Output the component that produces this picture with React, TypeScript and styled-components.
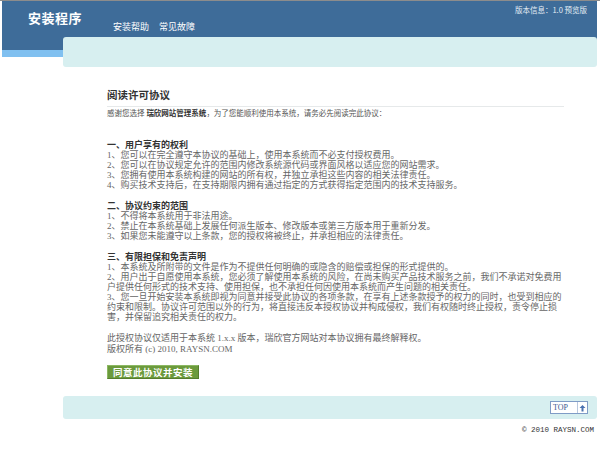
import React from "react";
import styled, { createGlobalStyle } from "styled-components";

const cnFont = `"Liberation Serif", "Noto Sans CJK SC", serif`;

const GlobalStyle = createGlobalStyle`
  body {
    margin: 0;
    background: #fff;
    font-family: ${cnFont};
  }
`;

const Page = styled.div`
  border-top: 1px solid #8c8c8c;
  padding: 0 3px 0 2px;
`;

const Header = styled.div`
  display: flex;
  align-items: flex-start;
  height: 36px;
  background: #3e6c99;
  color: #fff;
`;

const Logo = styled.div`
  width: 85px;
  padding: 10px 0 0 26px;
  font-size: 13px;
  font-weight: bold;
  line-height: 16px;
  letter-spacing: 0.5px;
`;

const Nav = styled.div`
  display: flex;
  gap: 10px;
  padding-top: 20px;
  font-family: "Noto Sans CJK SC", sans-serif;
  font-size: 9px;
  line-height: 11px;
`;

const Version = styled.div`
  margin-left: auto;
  padding: 4px 10px 0 0;
  font-family: "Noto Sans CJK SC", sans-serif;
  font-size: 7.5px;
  line-height: 10px;
  color: #e4ecf4;
`;

const SubBar = styled.div`
  display: flex;
  height: 30px;
`;

const SubEdge = styled.div`
  width: 61px;
  background: linear-gradient(
    #3e6c99 0 13px,
    #80c0f0 13px 20px,
    #fff 20px
  );
`;

const SubPanelWrap = styled.div`
  flex: 1;
  background: linear-gradient(#3e6c99 0 13px, #fff 13px);
`;

const SubPanel = styled.div`
  height: 100%;
  background: #d7eff0;
  border-radius: 3px;
`;

const Content = styled.div`
  width: 457px;
  padding: 22px 0 0 105px;
`;

const Heading = styled.h1`
  margin: 0;
  padding-bottom: 4px;
  border-bottom: 1px solid #e6e9ea;
  font-size: 10.5px;
  line-height: 13px;
  font-weight: bold;
  color: #333;
`;

const Thanks = styled.p`
  margin: 2px 0 21px;
  font-size: 7.5px;
  line-height: 10px;
  color: #555;

  b {
    color: #333;
  }
`;

const Section = styled.div`
  margin-bottom: 11px;
  font-size: 9px;
  line-height: 10px;
  color: #666;
`;

const SectionTitle = styled.div`
  font-weight: bold;
  color: #333;
`;

const Line = styled.div``;

const Notice = styled.div`
  font-size: 9px;
  line-height: 10.5px;
  color: #666;
`;

const AgreeButton = styled.button`
  display: block;
  box-sizing: border-box;
  margin-top: 11px;
  padding: 0 5px;
  height: 14px;
  background: #6b9a3c;
  border: 1px solid #8cb862;
  border-right-color: #557d2c;
  border-bottom-color: #557d2c;
  color: #fff;
  font-family: "Noto Sans CJK SC", sans-serif;
  font-size: 9.5px;
  font-weight: bold;
  line-height: 12px;
  letter-spacing: 0.5px;
`;

const FootBar = styled.div`
  display: flex;
  justify-content: flex-end;
  align-items: center;
  height: 23px;
  margin: 17px 0 0 61px;
  padding-right: 9px;
  background: #d7eff0;
  border-radius: 3px;
`;

const TopLink = styled.a`
  display: flex;
  align-items: stretch;
  height: 11px;
  background: #fff;
  border: 1px solid #7f9cc6;
  color: #3a5a90;
  font-family: "Liberation Serif", serif;
  font-size: 8px;
  line-height: 11px;
  text-decoration: none;
`;

const TopText = styled.span`
  width: 24px;
  padding-left: 2px;
  border-right: 1px solid #b8c8de;
`;

const TopArrow = styled.span`
  display: flex;
  align-items: center;
  justify-content: center;
  width: 9px;
`;

const Copyright = styled.div`
  padding: 6px 3px 0 0;
  text-align: right;
  font-family: "Liberation Mono", monospace;
  font-size: 7.5px;
  line-height: 10px;
  color: #333;
`;

const sections = [
  {
    title: "一、用户享有的权利",
    items: [
      "1、您可以在完全遵守本协议的基础上，使用本系统而不必支付授权费用。",
      "2、您可以在协议规定允许的范围内修改系统源代码或界面风格以适应您的网站需求。",
      "3、您拥有使用本系统构建的网站的所有权，并独立承担这些内容的相关法律责任。",
      "4、购买技术支持后，在支持期限内拥有通过指定的方式获得指定范围内的技术支持服务。",
    ],
  },
  {
    title: "二、协议约束的范围",
    items: [
      "1、不得将本系统用于非法用途。",
      "2、禁止在本系统基础上发展任何派生版本、修改版本或第三方版本用于重新分发。",
      "3、如果您未能遵守以上条款，您的授权将被终止，并承担相应的法律责任。",
    ],
  },
  {
    title: "三、有限担保和免责声明",
    items: [
      "1、本系统及所附带的文件是作为不提供任何明确的或隐含的赔偿或担保的形式提供的。",
      "2、用户出于自愿使用本系统，您必须了解使用本系统的风险，在尚未购买产品技术服务之前，我们不承诺对免费用户提供任何形式的技术支持、使用担保，也不承担任何因使用本系统而产生问题的相关责任。",
      "3、您一旦开始安装本系统即视为同意并接受此协议的各项条款，在享有上述条款授予的权力的同时，也受到相应的约束和限制。协议许可范围以外的行为，将直接违反本授权协议并构成侵权，我们有权随时终止授权，责令停止损害，并保留追究相关责任的权力。",
    ],
  },
];

function ArrowUp() {
  return (
    <svg width="7" height="8" viewBox="0 0 7 8">
      <path d="M3.5 1 L6.5 4 H4.5 V7.5 H2.5 V4 H0.5 Z" fill="#4a72b0" />
    </svg>
  );
}

export default function App() {
  return (
    <Page>
      <GlobalStyle />
      <Header>
        <Logo>安装程序</Logo>
        <Nav>
          <span>安装帮助</span>
          <span>常见故障</span>
        </Nav>
        <Version>版本信息：1.0 预览版</Version>
      </Header>
      <SubBar>
        <SubEdge />
        <SubPanelWrap>
          <SubPanel />
        </SubPanelWrap>
      </SubBar>

      <Content>
        <Heading>阅读许可协议</Heading>
        <Thanks>
          感谢您选择 <b>瑞欣网站管理系统</b>，为了您能顺利使用本系统，请务必先阅读完此协议：
        </Thanks>
        {sections.map((s) => (
          <Section key={s.title}>
            <SectionTitle>{s.title}</SectionTitle>
            {s.items.map((item) => (
              <Line key={item}>{item}</Line>
            ))}
          </Section>
        ))}
        <Notice>
          <Line>此授权协议仅适用于本系统 1.x.x 版本，瑞欣官方网站对本协议拥有最终解释权。</Line>
          <Line>版权所有 (c) 2010, RAYSN.COM</Line>
        </Notice>
        <AgreeButton>同意此协议并安装</AgreeButton>
      </Content>

      <FootBar>
        <TopLink href="#">
          <TopText>TOP</TopText>
          <TopArrow>
            <ArrowUp />
          </TopArrow>
        </TopLink>
      </FootBar>
      <Copyright>© 2010 RAYSN.COM</Copyright>
    </Page>
  );
}
